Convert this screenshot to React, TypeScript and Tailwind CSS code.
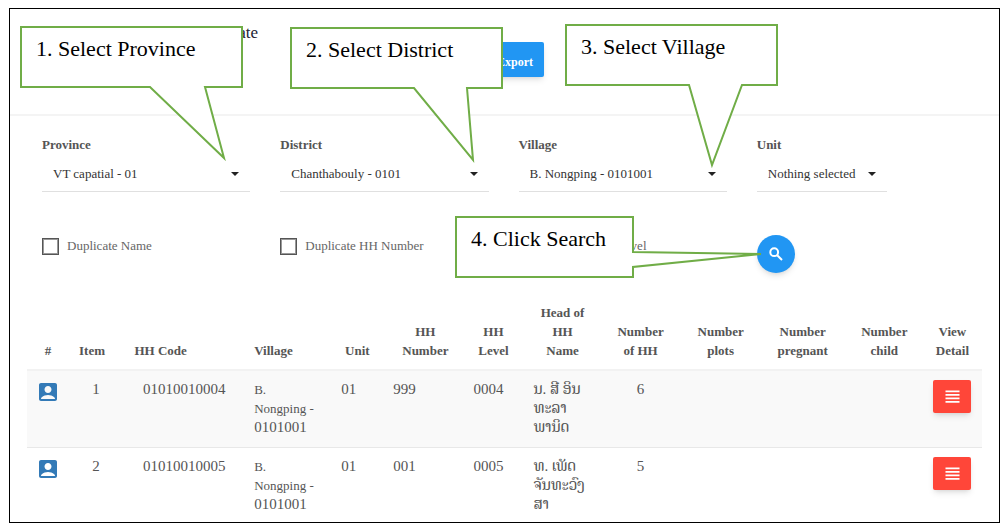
import { MdAccountBox, MdViewHeadline } from "react-icons/md";

const filters = [
  { id: "province", label: "Province", value: "VT capatial - 01", width: "w-full" },
  { id: "district", label: "District", value: "Chanthabouly - 0101", width: "w-full" },
  { id: "village", label: "Village", value: "B. Nongping - 0101001", width: "w-full" },
  { id: "unit", label: "Unit", value: "Nothing selected", width: "w-[130px]" },
];

const checks = [
  { id: "dup-name", label: "Duplicate Name", align: "text-left" },
  { id: "dup-number", label: "Duplicate HH Number", align: "text-left" },
  { id: "dup-level", label: "Level", align: "w-[103px] text-right" },
];

const columns = [
  { title: "#", width: "w-[42px]", pad: "px-1" },
  { title: "Item", width: "w-[46px]", pad: "px-1" },
  { title: "HH Code", width: "w-[131px]", pad: "pr-10" },
  { title: "Village", width: "w-[87px]", pad: "pl-2 text-left" },
  { title: "Unit", width: "w-[52px]", pad: "pl-2 pr-3" },
  { title: "HH Number", width: "w-[80px]", pad: "px-2" },
  { title: "HH Level", width: "w-[60px]", pad: "pl-2 pr-3" },
  { title: "Head of HH Name", width: "w-[74px]", pad: "px-3" },
  { title: "Number of HH", width: "w-[82px]", pad: "px-3" },
  { title: "Number plots", width: "w-[78px]", pad: "px-2" },
  { title: "Number pregnant", width: "w-[86px]", pad: "px-2" },
  { title: "Number child", width: "w-[77px]", pad: "px-2" },
  { title: "View Detail", width: "w-[59px]", pad: "px-2" },
];

const rows = [
  {
    item: 1,
    code: "01010010004",
    unit: "01",
    hhNumber: "999",
    level: "0004",
    head: ["ນ. ສີ ອິນ", "ທະລາ", "ພານິດ"],
    people: 6,
  },
  {
    item: 2,
    code: "01010010005",
    unit: "01",
    hhNumber: "001",
    level: "0005",
    head: ["ທ. ເພັດ", "ຈັນທະວົງ", "ສາ"],
    people: 5,
  },
];

// Points are relative to the top left corner of each note
const callouts = [
  {
    text: "1. Select Province",
    place: "left-[20px] top-[26px] w-[223px]",
    points: "1,1 222,1 222,61 185,61 204,132 130,61 1,61",
  },
  {
    text: "2. Select District",
    place: "left-[290px] top-[27px] w-[213px]",
    points: "1,1 212,1 212,61 177,61 183,133 124,61 1,61",
  },
  {
    text: "3. Select Village",
    place: "left-[565px] top-[24px] w-[213px]",
    points: "1,1 212,1 212,61 177,61 147,141 124,61 1,61",
  },
  {
    text: "4. Click Search",
    place: "left-[455px] top-[216px] w-[179px]",
    points: "1,1 178,1 178,36 306,38 178,51 178,61 1,61",
  },
];

function SearchIcon() {
  return (
    <svg className="size-[14px]" viewBox="0 0 14 14" fill="none" stroke="currentColor" strokeWidth="2" aria-hidden="true">
      <circle cx="5.2" cy="5.2" r="3.9" />
      <path d="M8.2 8.2L13 13" />
    </svg>
  );
}

function Callout({ text, place, points }: { text: string; place: string; points: string }) {
  return (
    <div className={`pointer-events-none absolute h-[62px] ${place}`}>
      <svg className="absolute inset-0 h-full w-full overflow-visible" aria-hidden="true">
        <polygon points={points} fill="#fff" stroke="#70ad47" strokeWidth="2" />
      </svg>
      <p className="relative whitespace-nowrap pl-4 pt-2 text-[22px] leading-[30px] text-black">{text}</p>
    </div>
  );
}

export default function App() {
  return (
    <main className="relative bg-white pt-2 pr-[6px] pb-[9px] pl-[9px] font-['Liberation_Serif','Noto_Serif_Lao',serif] text-[13px] text-[#555]">
      <div className="border border-black">
        <header className="flex h-[107px] items-start border-b-2 border-[#f4f4f4] pl-[199px]">
          <h1 className="w-[277px] pt-3 text-[17px] leading-6 text-[#223]">Update</h1>
          <button className="mt-[33px] h-[35px] rounded-xs bg-[#2196f3] px-[11px] pt-1 text-xs font-bold text-white shadow-md">
            Export
          </button>
        </header>

        <form className="pr-[19px] pl-[17px]" onSubmit={(e) => e.preventDefault()}>
          <div className="grid grid-cols-4 pt-[19px]">
            {filters.map((f) => (
              <div key={f.id} className="px-[15px]">
                <label htmlFor={f.id} className="block font-bold leading-5">
                  {f.label}
                </label>
                <div className={`relative ${f.width}`}>
                  <select
                    id={f.id}
                    className="block h-[37px] w-full appearance-none border-b border-[#e0e0e0] bg-transparent pt-[2px] pl-[11px] text-[#333]"
                  >
                    <option>{f.value}</option>
                  </select>
                  <svg
                    className="pointer-events-none absolute right-[11px] top-[17px] h-1 w-2"
                    viewBox="0 0 8 4"
                    aria-hidden="true"
                  >
                    <path d="M0 0h8L4 4z" fill="#222" />
                  </svg>
                </div>
              </div>
            ))}
          </div>

          <div className="mt-[43px] grid grid-cols-4 items-start">
            {checks.map((c) => (
              <div key={c.id} className="flex items-center gap-2 px-[15px] pt-[2px]">
                <input
                  id={c.id}
                  type="checkbox"
                  className="size-[17px] appearance-none border border-[#555] outline outline-[#999] -outline-offset-2 checked:bg-[#2196f3]"
                />
                <label htmlFor={c.id} className={`whitespace-nowrap leading-[18px] text-[#666] ${c.align}`}>
                  {c.label}
                </label>
              </div>
            ))}
            <div className="px-[15px]">
              <button
                aria-label="Search"
                className="flex size-[38px] items-center justify-center rounded-full bg-[#2196f3] text-white shadow-md"
              >
                <SearchIcon />
              </button>
            </div>
          </div>
        </form>

        <div className="mt-[21px] px-[17px]">
          <table className="w-full table-fixed">
            <thead>
              <tr className="border-b-2 border-[#f2f2f2]">
                {columns.map((c) => (
                  <th key={c.title} className={`py-[9px] align-bottom leading-[19px] ${c.width} ${c.pad}`}>
                    {c.title}
                  </th>
                ))}
              </tr>
            </thead>
            <tbody className="align-top text-[15px] leading-[19px]">
              {rows.map((r) => (
                <tr
                  key={r.item}
                  className="border-b border-[#e8e8e8] odd:bg-[#f9f9f9] last:border-0 *:pt-[9px] *:pb-[10px] last:*:pb-2"
                >
                  <td>
                    <a href="#" aria-label="Household profile" className="flex justify-center text-[#337ab7]">
                      <MdAccountBox size={24} />
                    </a>
                  </td>
                  <td className="pl-2 text-center">{r.item}</td>
                  <td className="pl-7">{r.code}</td>
                  <td className="pl-2">
                    <span className="block text-[13px] leading-[19px]">B.</span>
                    <span className="block text-[13px] leading-[19px]">Nongping -</span>
                    <span className="block">0101001</span>
                  </td>
                  <td className="pl-2">{r.unit}</td>
                  <td className="pl-2">{r.hhNumber}</td>
                  <td className="pl-2">{r.level}</td>
                  <td className="pl-2">
                    {r.head.map((line) => (
                      <span key={line} className="block h-[19px] whitespace-nowrap">
                        {line}
                      </span>
                    ))}
                  </td>
                  <td className="text-center">{r.people}</td>
                  <td></td>
                  <td></td>
                  <td></td>
                  <td>
                    <button
                      aria-label="View detail"
                      className="mx-auto flex h-[33px] w-[38px] items-center justify-center rounded-xs bg-[#ff4639] text-white shadow-md"
                    >
                      <MdViewHeadline size={21} />
                    </button>
                  </td>
                </tr>
              ))}
            </tbody>
          </table>
        </div>
      </div>

      {callouts.map((c) => (
        <Callout key={c.text} {...c} />
      ))}
    </main>
  );
}
